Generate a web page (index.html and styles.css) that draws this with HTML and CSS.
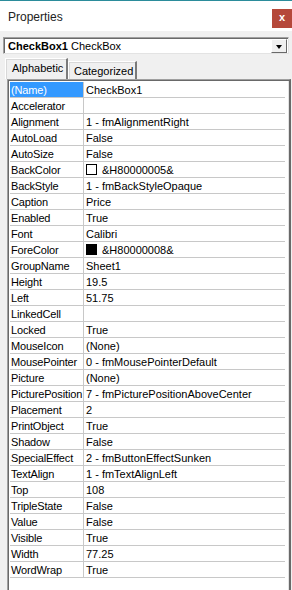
FILE: index.html
```html
<!DOCTYPE html>
<html lang="en">
<head>
    <meta charset="UTF-8">
    <title>Properties</title>
    <link rel="stylesheet" href="styles.css">
</head>
<body>
    <div class="window">
        <header class="titlebar">
            <span class="title">Properties</span>
            <span class="close">x</span>
        </header>

        <div class="combo">
            <span class="combo-text"><b>CheckBox1</b> CheckBox</span>
            <span class="combo-btn"><span class="arrow"></span></span>
        </div>

        <div class="tabs">
            <div class="tab active">Alphabetic</div>
            <div class="tab">Categorized</div>
        </div>

        <div class="grid">
            <div class="row selected"><div class="key">(Name)</div><div class="val">CheckBox1</div></div>
            <div class="row"><div class="key">Accelerator</div><div class="val"></div></div>
            <div class="row"><div class="key">Alignment</div><div class="val">1 - fmAlignmentRight</div></div>
            <div class="row"><div class="key">AutoLoad</div><div class="val">False</div></div>
            <div class="row"><div class="key">AutoSize</div><div class="val">False</div></div>
            <div class="row"><div class="key">BackColor</div><div class="val"><span class="swatch white"></span>&amp;H80000005&amp;</div></div>
            <div class="row"><div class="key">BackStyle</div><div class="val">1 - fmBackStyleOpaque</div></div>
            <div class="row"><div class="key">Caption</div><div class="val">Price</div></div>
            <div class="row"><div class="key">Enabled</div><div class="val">True</div></div>
            <div class="row"><div class="key">Font</div><div class="val">Calibri</div></div>
            <div class="row"><div class="key">ForeColor</div><div class="val"><span class="swatch black"></span>&amp;H80000008&amp;</div></div>
            <div class="row"><div class="key">GroupName</div><div class="val">Sheet1</div></div>
            <div class="row"><div class="key">Height</div><div class="val">19.5</div></div>
            <div class="row"><div class="key">Left</div><div class="val">51.75</div></div>
            <div class="row"><div class="key">LinkedCell</div><div class="val"></div></div>
            <div class="row"><div class="key">Locked</div><div class="val">True</div></div>
            <div class="row"><div class="key">MouseIcon</div><div class="val">(None)</div></div>
            <div class="row"><div class="key">MousePointer</div><div class="val">0 - fmMousePointerDefault</div></div>
            <div class="row"><div class="key">Picture</div><div class="val">(None)</div></div>
            <div class="row"><div class="key">PicturePosition</div><div class="val">7 - fmPicturePositionAboveCenter</div></div>
            <div class="row"><div class="key">Placement</div><div class="val">2</div></div>
            <div class="row"><div class="key">PrintObject</div><div class="val">True</div></div>
            <div class="row"><div class="key">Shadow</div><div class="val">False</div></div>
            <div class="row"><div class="key">SpecialEffect</div><div class="val">2 - fmButtonEffectSunken</div></div>
            <div class="row"><div class="key">TextAlign</div><div class="val">1 - fmTextAlignLeft</div></div>
            <div class="row"><div class="key">Top</div><div class="val">108</div></div>
            <div class="row"><div class="key">TripleState</div><div class="val">False</div></div>
            <div class="row"><div class="key">Value</div><div class="val">False</div></div>
            <div class="row"><div class="key">Visible</div><div class="val">True</div></div>
            <div class="row"><div class="key">Width</div><div class="val">77.25</div></div>
            <div class="row"><div class="key">WordWrap</div><div class="val">True</div></div>
        </div>
    </div>
</body>
</html>
```

FILE: styles.css
```css
* {
    margin: 0;
    padding: 0;
    box-sizing: border-box;
}

body {
    width: 292px;
    height: 590px;
    overflow: hidden;
    background: #f0f0f0;
    font-family: 'Liberation Sans', Arial, sans-serif;
    font-size: 11px;
    color: #000;
}

.window {
    height: 590px;
    display: flex;
    flex-direction: column;
}

.titlebar {
    height: 31px;
    flex: none;
    background: #fff;
    border-top: 1px solid #2b8c9b;
    display: flex;
    justify-content: space-between;
    align-items: flex-start;
}

.title {
    font-size: 12px;
    color: #222;
    margin: 9px 0 0 8px;
}

.close {
    width: 20px;
    height: 19px;
    margin-top: 8px;
    background: #b5483a;
    color: #fff;
    font-weight: bold;
    font-size: 11px;
    line-height: 16px;
    text-align: center;
}

/* object selector */
.combo {
    margin: 6px 3px 0 3px;
    height: 17px;
    flex: none;
    background: #fff;
    border: 1px solid #a0a0a0;
    border-right-color: #e3e3e3;
    border-bottom-color: #e3e3e3;
    box-shadow: inset 1px 1px 0 #696969;
    display: flex;
    justify-content: space-between;
}

.combo-text {
    padding: 1px 0 0 4px;
    line-height: 14px;
}

.combo-btn {
    width: 16px;
    height: 14px;
    margin: 1px 1px 0 0;
    background: #f0f0f0;
    border: 1px solid #fff;
    border-right-color: #696969;
    border-bottom-color: #696969;
    display: flex;
    align-items: center;
    justify-content: center;
}

.arrow {
    width: 0;
    height: 0;
    border-left: 3.5px solid transparent;
    border-right: 3.5px solid transparent;
    border-top: 4px solid #000;
    margin-top: 1px;
}

/* tabs */
.tabs {
    display: flex;
    align-items: flex-end;
    margin: 4px 0 0 5px;
    height: 21px;
    flex: none;
}

.tab {
    height: 18px;
    padding: 2px 0 0 5px;
    width: 69px;
    border: 1px solid #fff;
    border-bottom: none;
    border-right: 2px solid #7a7a7a;
    box-shadow: inset 1px 1px 0 #d8d8d8;
    line-height: 14px;
}

.tab.active {
    height: 21px;
    padding-left: 6px;
    width: 63px;
    position: relative;
    z-index: 1;
}

/* property grid */
.grid {
    flex: 1;
    margin: 0 1px 0 7px;
    background: #fff;
    border-top: 1px solid #a0a0a0;
    border-left: 1px solid #a0a0a0;
    border-right: 2px solid #696969;
    box-shadow: inset 1px 1px 0 #696969, inset -1px 0 0 #e3e3e3, inset -2px 0 0 #fff;
    padding: 2px 4px 0 2px;
}

.row {
    display: flex;
    height: 16px;
    border-bottom: 1px solid #c8c8c8;
    line-height: 16px;
    white-space: nowrap;
    overflow: hidden;
}

.key {
    width: 74px;
    flex: none;
    padding-left: 1px;
    border-right: 1px solid #c8c8c8;
    letter-spacing: -0.15px;
    overflow: hidden;
}

.row.selected .key {
    background: #3399ff;
    color: #fff;
}

.val {
    padding-left: 2px;
    display: flex;
    align-items: center;
}

.swatch {
    width: 11px;
    height: 11px;
    border: 1px solid #000;
    margin: 0 5px 0 0;
}

.swatch.white {
    background: #fff;
}

.swatch.black {
    background: #000;
}
```
